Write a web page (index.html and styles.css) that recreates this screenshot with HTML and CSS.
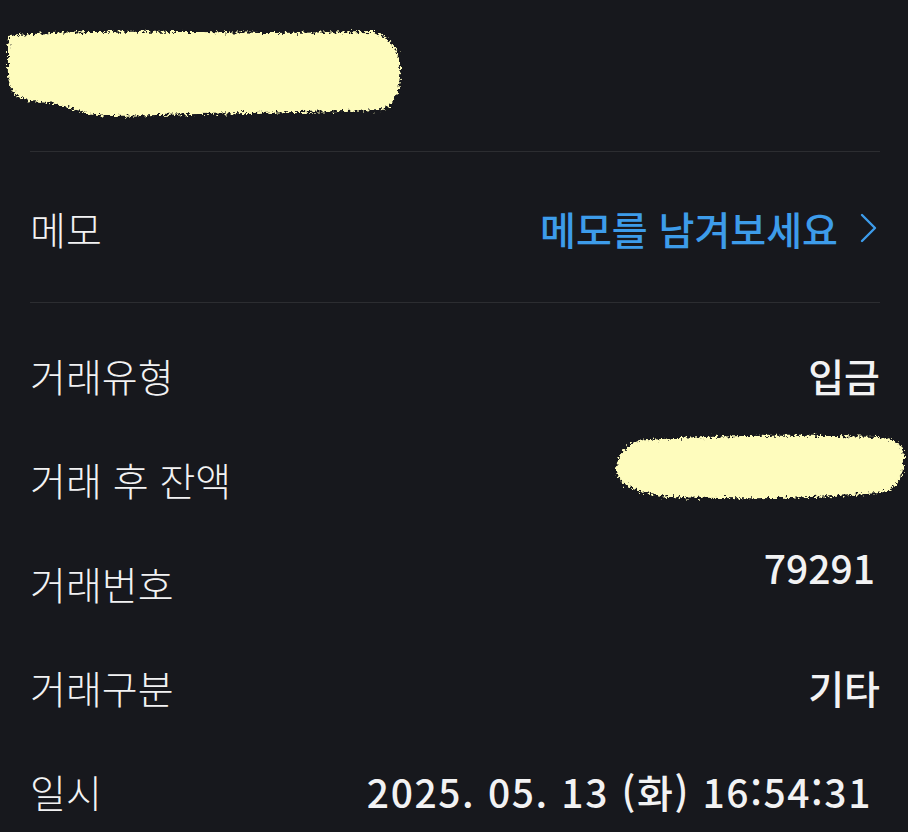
FILE: index.html
```html
<!DOCTYPE html>
<html lang="ko">
<head>
<meta charset="utf-8">
<link rel="stylesheet" href="styles.css">
</head>
<body>
<div class="page">
  <header class="head">
    <svg class="blob blob-top" viewBox="0 0 410 100" width="410" height="100">
      <defs>
        <filter id="rough" x="-10%" y="-20%" width="120%" height="140%">
          <feTurbulence type="fractalNoise" baseFrequency="0.35" numOctaves="3" seed="4"/>
          <feDisplacementMap in="SourceGraphic" scale="9" xChannelSelector="R" yChannelSelector="G"/>
        </filter>
      </defs>
      <path filter="url(#rough)" fill="#fefcbd" d="M8 12 C60 6 180 8 270 9 L372 8 C385 12 396 22 398 40 C400 60 394 80 380 86 C300 88 200 90 110 92 C80 92 70 80 30 77 C10 74 5 62 6 42 C6 25 6 16 8 12 Z"/>
    </svg>
  </header>

  <div class="memo-row">
    <span class="label">메모</span>
    <a class="memo-link">메모를 남겨보세요
      <svg class="chev" viewBox="0 0 18 30" width="18" height="30"><polyline points="2,2 15,15 2,28" fill="none" stroke="#3d9cea" stroke-width="2.4" stroke-linecap="round" stroke-linejoin="round"/></svg>
    </a>
  </div>

  <ul class="info">
    <li class="row"><span class="label">거래유형</span><span class="value">입금</span></li>
    <li class="row"><span class="label">거래 후 잔액</span>
      <svg class="blob blob-bal" viewBox="0 0 300 80" width="300" height="80">
        <defs>
          <filter id="rough2" x="-10%" y="-20%" width="120%" height="140%">
            <feTurbulence type="fractalNoise" baseFrequency="0.4" numOctaves="3" seed="9"/>
            <feDisplacementMap in="SourceGraphic" scale="9" xChannelSelector="R" yChannelSelector="G"/>
          </filter>
        </defs>
        <path filter="url(#rough2)" fill="#fefcbd" d="M30 14 C90 8 200 8 270 10 C290 12 296 20 296 30 C296 50 290 62 270 66 C200 72 120 72 60 70 C30 66 10 58 8 44 C8 34 14 20 30 14 Z"/>
      </svg>
    </li>
    <li class="row"><span class="label">거래번호</span><span class="value up">79291</span></li>
    <li class="row"><span class="label">거래구분</span><span class="value">기타</span></li>
    <li class="row"><span class="label">일시</span><span class="value date">2025. 05. 13 (화) 16:54:31</span></li>
  </ul>
</div>
</body>
</html>
```

FILE: styles.css
```css
* { box-sizing: border-box; }
html, body {
  margin: 0;
  padding: 0;
  background: #17181d;
}
body {
  font-family: "Noto Sans CJK KR", "Noto Sans", sans-serif;
  color: #f2f2f3;
}
.page {
  padding: 0 28px 0 30px;
}
.head {
  position: relative;
  height: 152px;
  border-bottom: 1px solid #2c2d31;
}
.blob { display: block; }
.blob-top {
  position: absolute;
  left: -28px;
  top: 24px;
}
.memo-row {
  height: 151px;
  display: flex;
  align-items: center;
  justify-content: space-between;
  border-bottom: 1px solid #2c2d31;
  padding-top: 2px;
}
.label {
  font-size: 39px;
  font-weight: 300;
  line-height: 1;
}
.memo-link {
  display: flex;
  align-items: center;
  gap: 22px;
  color: #3d9cea;
  font-size: 39px;
  font-weight: 500;
  line-height: 1;
}
.chev { margin-right: 2px; }
.info {
  list-style: none;
  margin: 0;
  padding: 20px 0 0;
}
.row {
  position: relative;
  height: 104px;
  display: flex;
  align-items: center;
  justify-content: space-between;
}
.value {
  font-size: 39px;
  font-weight: 500;
  line-height: 1;
}
.value.up {
  margin-bottom: 32px;
  margin-right: 5px;
}
.value.date {
  margin-right: 8px;
  letter-spacing: 1.6px;
}
.blob-bal {
  position: absolute;
  right: -28px;
  top: 0;
}
```
